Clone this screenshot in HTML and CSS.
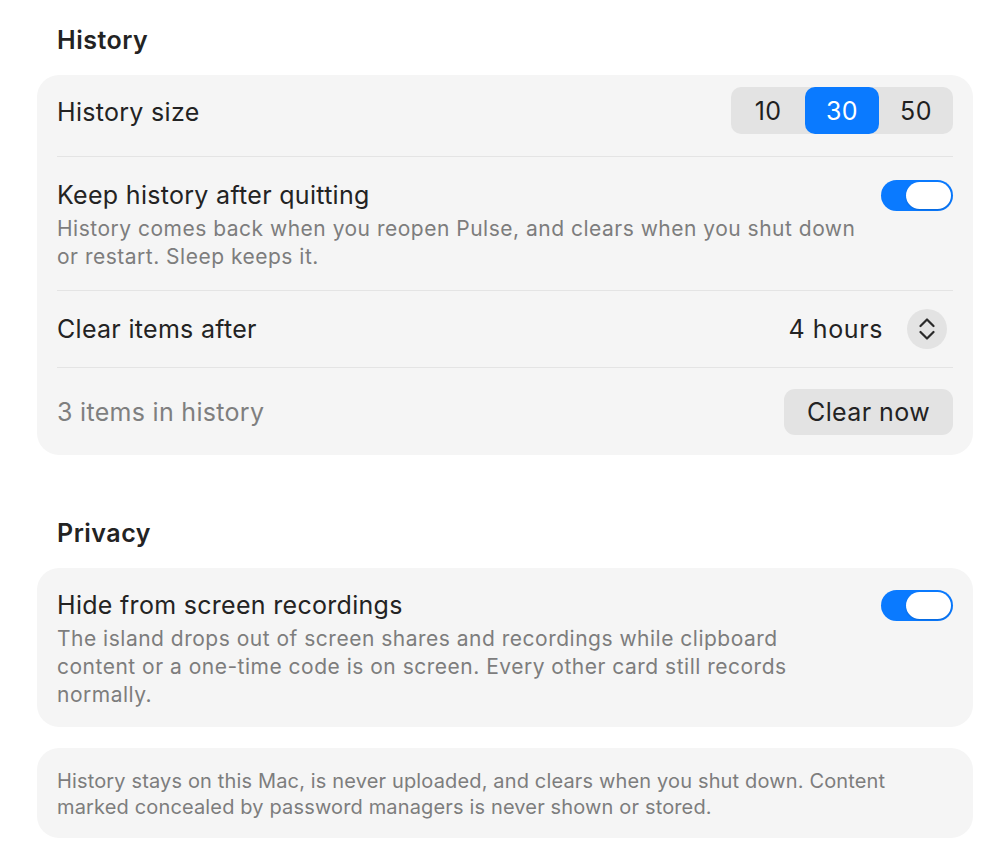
FILE: index.html
```html
<!DOCTYPE html>
<html lang="en">
<head>
    <meta charset="UTF-8">
    <meta name="viewport" content="width=device-width, initial-scale=1.0">
    <title>Settings</title>
    <link rel="stylesheet" href="styles.css">
</head>
<body>
    <div class="settings">
        <h2 class="section-title">History</h2>
        <div class="group">
            <div class="row row-first">
                <span class="label">History size</span>
                <div class="segmented">
                    <span class="seg">10</span>
                    <span class="seg active">30</span>
                    <span class="seg">50</span>
                </div>
            </div>
            <div class="row row-text">
                <div class="text">
                    <div class="label">Keep history after quitting</div>
                    <div class="desc">History comes back when you reopen Pulse, and clears when you shut down or restart. Sleep keeps it.</div>
                </div>
                <div class="toggle on"><span class="knob"></span></div>
            </div>
            <div class="row row-picker">
                <span class="label">Clear items after</span>
                <div class="picker">
                    <span class="picker-value">4 hours</span>
                    <span class="stepper">
                        <svg width="16" height="22" viewBox="0 0 16 22" fill="none" stroke="#2a2a2a" stroke-width="2.2" stroke-linecap="round" stroke-linejoin="round">
                            <path d="M1.5 8 L8 1.5 L14.5 8"/>
                            <path d="M1.5 14 L8 20.5 L14.5 14"/>
                        </svg>
                    </span>
                </div>
            </div>
            <div class="row row-last">
                <span class="label muted">3 items in history</span>
                <button class="btn">Clear now</button>
            </div>
        </div>

        <h2 class="section-title privacy">Privacy</h2>
        <div class="group">
            <div class="row row-text row-single">
                <div class="text">
                    <div class="label">Hide from screen recordings</div>
                    <div class="desc">The island drops out of screen shares and recordings while clipboard content or a one-time code is on screen. Every other card still records normally.</div>
                </div>
                <div class="toggle on"><span class="knob"></span></div>
            </div>
        </div>

        <div class="group note">
            History stays on this Mac, is never uploaded, and clears when you shut down. Content marked concealed by password managers is never shown or stored.
        </div>
    </div>
</body>
</html>
```

FILE: styles.css
```css
*{
    margin: 0;
    padding: 0;
    box-sizing: border-box;
}
body{
    background: #ffffff;
    font-family: Inter, "Noto Sans", sans-serif;
    color: #232323;
    -webkit-font-smoothing: antialiased;
}
.settings{
    width: 936px;
    margin: 25px 0 0 37px;
}
.section-title{
    font-size: 25px;
    font-weight: 600;
    line-height: 30px;
    padding-left: 20px;
    margin-bottom: 20px;
    letter-spacing: 0.5px;
}
.section-title.privacy{
    margin-top: 63px;
}
.group{
    background: #f5f5f5;
    border-radius: 22px;
    padding: 0 20px;
}
.row{
    display: flex;
    justify-content: space-between;
    align-items: center;
    border-bottom: 1px solid #e4e4e4;
    padding: 20px 0;
}
.row:last-child{
    border-bottom: none;
}
.row-first{
    padding: 12px 0 22px;
}
.row-first .label{
    padding-top: 3px;
}
.row-text{
    align-items: flex-start;
    padding: 23px 0 19px;
}
.row-single{
    padding: 22px 0 18px;
}
.row-picker{
    padding: 18px 0 18px;
}
.row-last{
    padding: 21px 0 20px;
}
.label{
    font-size: 25px;
    line-height: 30px;
    letter-spacing: 0.3px;
}
.label.muted{
    color: #7f7f7f;
}
.text{
    width: 802px;
}
.desc{
    font-size: 21px;
    line-height: 28px;
    color: #7d7d7d;
    margin-top: 5px;
    letter-spacing: 0.5px;
}

/* segmented control */
.segmented{
    display: flex;
    background: #e3e3e3;
    border-radius: 10px;
    height: 47px;
}
.seg{
    width: 74px;
    display: flex;
    align-items: center;
    justify-content: center;
    font-size: 25px;
    letter-spacing: 0.4px;
    color: #1f1f1f;
    border-radius: 10px;
}
.seg.active{
    background: #0a7aff;
    color: #ffffff;
}

/* switch */
.toggle{
    width: 72px;
    height: 31px;
    border-radius: 16px;
    background: #e3e3e3;
    padding: 2px;
    display: flex;
    flex-shrink: 0;
}
.toggle.on{
    background: #0a7aff;
    justify-content: flex-end;
}
.knob{
    width: 45px;
    height: 27px;
    border-radius: 14px;
    background: #ffffff;
    box-shadow: 0 1px 2px rgba(0,0,0,0.15);
}

/* popup picker */
.picker{
    display: flex;
    align-items: center;
    gap: 24px;
    margin-right: 6px;
}
.picker-value{
    font-size: 25px;
    letter-spacing: 0.6px;
}
.stepper{
    width: 40px;
    height: 40px;
    border-radius: 50%;
    background: #e3e3e3;
    display: flex;
    align-items: center;
    justify-content: center;
}

.btn{
    font-family: inherit;
    font-size: 25px;
    color: #232323;
    background: #e3e3e3;
    border: none;
    border-radius: 11px;
    height: 46px;
    padding: 0 23px;
    letter-spacing: 0.4px;
}

.note{
    margin-top: 21px;
    padding: 20px 20px 18px;
    font-size: 20px;
    line-height: 26px;
    color: #7d7d7d;
    letter-spacing: 0.15px;
}
```
